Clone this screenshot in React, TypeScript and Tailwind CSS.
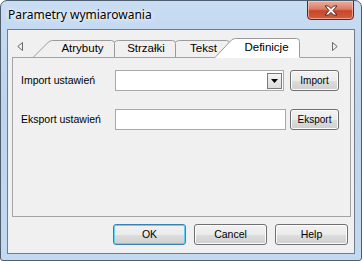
import React from "react";

function Arrow({ dir }: { dir: "left" | "right" }) {
  return (
    <svg width="6" height="9" viewBox="0 0 6 9" className="shrink-0">
      {dir === "left" ? (
        <path d="M5.5,0.5 L0.8,4.5 L5.5,8.5 Z" fill="none" stroke="#6a6a6a" strokeWidth="1" />
      ) : (
        <path d="M0.5,0.5 L5.2,4.5 L0.5,8.5 Z" fill="none" stroke="#6a6a6a" strokeWidth="1" />
      )}
    </svg>
  );
}

function TabShape({ w, h, active }: { w: number; h: number; active?: boolean }) {
  const s = active ? h - 1 : h;
  const fillPath = `M0,${h} L${s - 1.5},2 Q${s + 0.5},0.5 ${s + 2.5},0.5 L${w - 3.5},0.5 Q${w - 0.5},0.5 ${w - 0.5},3.5 L${w - 0.5},${h} Z`;
  const linePath = `M0.5,${h} L${s - 1.5},2 Q${s + 0.5},0.5 ${s + 2.5},0.5 L${w - 3.5},0.5 Q${w - 0.5},0.5 ${w - 0.5},3.5 L${w - 0.5},${active ? h - 1 : h}`;
  return (
    <svg width={w} height={h} viewBox={`0 0 ${w} ${h}`} className="absolute inset-0">
      <path d={fillPath} fill={active ? "#ffffff" : "#f0f0f0"} />
      <path d={linePath} fill="none" stroke="#9a9a9a" strokeWidth="1" />
    </svg>
  );
}

function Button({ children, className = "", primary }: { children: React.ReactNode; className?: string; primary?: boolean }) {
  return (
    <div
      className={`flex items-center justify-center rounded-[3px] border ${
        primary ? "border-[#3c7fb1] shadow-[inset_0_0_0_1px_#5fd3f5]" : "border-[#707070] shadow-[inset_0_0_0_1px_#fcfcfc]"
      } bg-[linear-gradient(to_bottom,#f2f2f2_0%,#ebebeb_50%,#dddddd_51%,#cfcfcf_100%)] text-black ${className}`}
    >
      {children}
    </div>
  );
}

export default function App() {
  return (
    <div className="w-[362px] h-[261px] overflow-hidden rounded-t-[7px] rounded-b-[3px] border border-[#4f5e6e] bg-[linear-gradient(to_bottom,#c8dcf2_0%,#bdd4ed_40%,#c3d9f0_100%)] flex flex-col font-['Liberation_Sans',Arial,sans-serif]">
      <div className="h-[28px] shrink-0 flex items-start justify-between">
        <div className="h-[28px] flex items-center pl-[7px] text-[12px] text-black font-['Noto_Sans','Liberation_Sans',sans-serif] [text-shadow:0_0_6px_#ffffff,0_0_3px_#ffffff]">
          Parametry wymiarowania
        </div>
        <div className="-mt-px mr-[7px] w-[47px] h-[20px] rounded-b-[4px] border border-[#6b2215] bg-[linear-gradient(to_bottom,#eab0a2_0%,#dd7a62_45%,#c9452a_55%,#d0603f_100%)] shadow-[inset_0_0_0_1px_rgba(255,210,200,0.6)] flex items-center justify-center">
          <svg width="14" height="11" viewBox="0 0 14 11">
            <path
              d="M1,1 L4.5,1 L7,3.6 L9.5,1 L13,1 L9,5.5 L13,10 L9.5,10 L7,7.4 L4.5,10 L1,10 L5,5.5 Z"
              fill="#ffffff"
              stroke="#5a2319"
              strokeWidth="1"
              strokeLinejoin="round"
            />
          </svg>
        </div>
      </div>

      <div className="mx-[6px] h-[225px] shrink-0 border border-[#6f7d8c] bg-[#f0f0f0] flex flex-col pt-[8px]">
        <div className="h-[19px] flex items-end">
          <div className="ml-[9px] self-start mt-[4px]">
            <Arrow dir="left" />
          </div>
          <div className="relative z-[4] ml-[10px] w-[82px] h-[17px] flex items-center">
            <TabShape w={82} h={17} />
            <span className="relative flex-1 pl-[17px] text-center text-[11.5px] text-black">Atrybuty</span>
          </div>
          <div className="relative z-[3] -ml-[16px] w-[77px] h-[17px] flex items-center">
            <TabShape w={77} h={17} />
            <span className="relative flex-1 pl-[17px] text-center text-[11.5px] text-black">Strzałki</span>
          </div>
          <div className="relative z-[2] -ml-[16px] w-[70px] h-[17px] flex items-center">
            <TabShape w={70} h={17} />
            <span className="relative flex-1 pl-[17px] text-center text-[11.5px] text-black">Tekst</span>
          </div>
          <div className="relative z-[5] -ml-[16px] -mb-px w-[86px] h-[20px] flex items-center pb-px">
            <TabShape w={86} h={20} active />
            <span className="relative flex-1 pl-[19px] text-center text-[11.5px] text-black">Definicje</span>
          </div>
          <div className="ml-[32px] self-start mt-[4px]">
            <Arrow dir="right" />
          </div>
        </div>

        <div className="relative z-[1] ml-[4px] w-[339px] h-[160px] border border-[#a3a3a3] bg-[#f0f0f0] pt-[12px] pl-[8px]">
          <div className="flex items-center h-[21px]">
            <div className="w-[94px] text-[10.5px] text-black">Import ustawień</div>
            <div className="w-[169px] h-[21px] border border-[#a9a9a9] bg-white flex items-center justify-end pr-px">
              <div className="w-[15px] h-[16px] border border-[#7a7a7a] bg-[linear-gradient(to_bottom,#f4f4f4,#dcdcdc)] flex items-center justify-center">
                <svg width="7" height="4" viewBox="0 0 7 4">
                  <path d="M0,0 L7,0 L3.5,4 Z" fill="#000" />
                </svg>
              </div>
            </div>
            <Button className="ml-[6px] w-[49px] h-[21px] text-[10px]">Import</Button>
          </div>
          <div className="flex items-center h-[21px] mt-[18px]">
            <div className="w-[94px] text-[10.5px] text-black">Eksport ustawień</div>
            <div className="w-[171px] h-[21px] border border-[#a9a9a9] bg-white" />
            <Button className="ml-[4px] w-[49px] h-[21px] text-[10px]">Eksport</Button>
          </div>
        </div>

        <div className="mt-[7px] flex justify-end gap-[8px] pr-[6px]">
          <Button primary className="w-[73px] h-[21px] text-[10.5px]">OK</Button>
          <Button className="w-[73px] h-[21px] text-[10.5px]">Cancel</Button>
          <Button className="w-[73px] h-[21px] text-[10.5px]">Help</Button>
        </div>
      </div>
    </div>
  );
}
